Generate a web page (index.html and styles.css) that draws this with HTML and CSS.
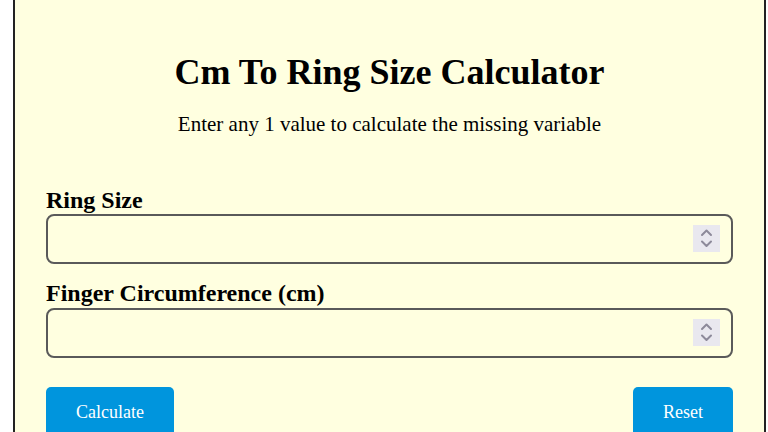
FILE: index.html
```
<!DOCTYPE html>
<html lang="en">
<head>
<meta charset="utf-8">
<title>Cm To Ring Size Calculator</title>
<link rel="stylesheet" href="styles.css">
</head>
<body>
<div class="card">
  <h1 class="title">Cm To Ring Size Calculator</h1>
  <p class="subtitle">Enter any 1 value to calculate the missing variable</p>
  <form class="form">
    <div class="field">
      <label class="label" for="ring">Ring Size</label>
      <div class="input-wrap">
        <input class="input" id="ring" type="text" inputmode="decimal">
        <span class="spinner" aria-hidden="true">
          <svg width="27" height="27" viewBox="0 0 27 27"><path d="M9 10 L13.5 5.5 L18 10" fill="none" stroke="#8d8a9a" stroke-width="2" stroke-linecap="round" stroke-linejoin="round"/><path d="M9 16.5 L13.5 21 L18 16.5" fill="none" stroke="#8d8a9a" stroke-width="2" stroke-linecap="round" stroke-linejoin="round"/></svg>
        </span>
      </div>
    </div>
    <div class="field">
      <label class="label" for="circ">Finger Circumference (cm)</label>
      <div class="input-wrap">
        <input class="input" id="circ" type="text" inputmode="decimal">
        <span class="spinner" aria-hidden="true">
          <svg width="27" height="27" viewBox="0 0 27 27"><path d="M9 10 L13.5 5.5 L18 10" fill="none" stroke="#8d8a9a" stroke-width="2" stroke-linecap="round" stroke-linejoin="round"/><path d="M9 16.5 L13.5 21 L18 16.5" fill="none" stroke="#8d8a9a" stroke-width="2" stroke-linecap="round" stroke-linejoin="round"/></svg>
        </span>
      </div>
    </div>
    <div class="actions">
      <button class="btn" type="button">Calculate</button>
      <button class="btn" type="reset">Reset</button>
    </div>
  </form>
</div>
</body>
</html>
```
FILE: styles.css
```
html, body {
  margin: 0;
  padding: 0;
  background: #ffffff;
  overflow: hidden;
}
body {
  font-family: "Liberation Serif", "Times New Roman", serif;
  color: #000;
}
.card {
  box-sizing: border-box;
  margin-left: 13px;
  width: 753px;
  height: 460px;
  background: #ffffe0;
  border: 2px solid #222;
  border-top: 0;
  padding: 52px 31px 0 31px;
}
.title {
  margin: 0;
  font-size: 36px;
  line-height: 1.15;
  font-weight: bold;
  text-align: center;
}
.subtitle {
  margin: 19px 0 0 0;
  font-size: 21px;
  line-height: 1.15;
  text-align: center;
}
.form {
  margin-top: 50px;
  display: flex;
  flex-direction: column;
}
.field {
  display: flex;
  flex-direction: column;
  margin-bottom: 16px;
}
.label {
  font-size: 24px;
  line-height: 1.15;
  font-weight: bold;
}
.input-wrap {
  position: relative;
}
.input {
  box-sizing: border-box;
  display: block;
  height: 50px;
  width: 100%;
  margin: 0;
  padding: 0 48px 0 12px;
  background: transparent;
  border: 2px solid #5a5a5a;
  border-radius: 8px;
  font-family: inherit;
  font-size: 18px;
  outline: none;
}
.spinner {
  position: absolute;
  right: 13px;
  top: 11px;
  width: 27px;
  height: 27px;
  background: #e9e8ef;
  display: flex;
}
.actions {
  margin-top: 13px;
  display: flex;
  justify-content: space-between;
}
.btn {
  background: #0095dd;
  color: #fff;
  border: 0;
  border-radius: 5px;
  padding: 15px 30px;
  font-family: "Liberation Serif", "Times New Roman", serif;
  font-size: 18px;
  line-height: 1.15;
}
```
